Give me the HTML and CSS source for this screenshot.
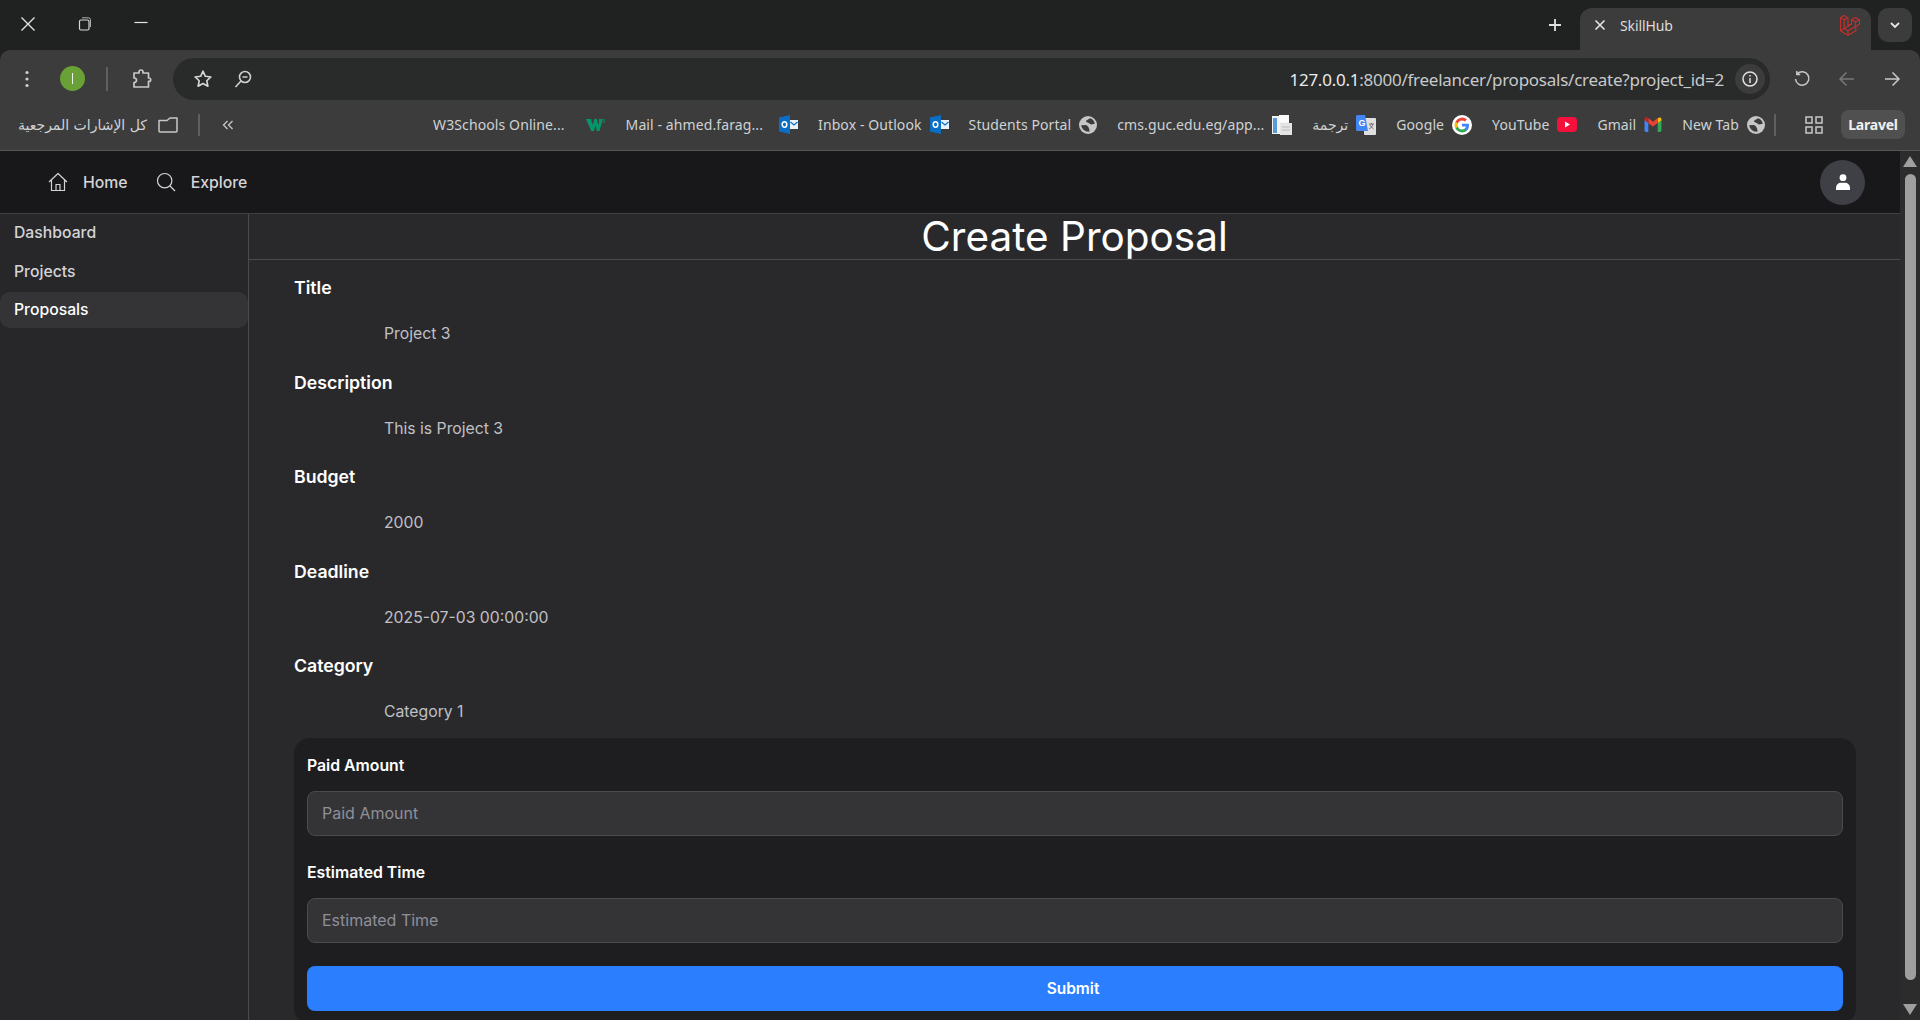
FILE: index.html
```html
<!DOCTYPE html>
<html lang="en">
<head>
<meta charset="utf-8">
<title>SkillHub</title>
<link rel="stylesheet" href="styles.css">
</head>
<body>
<div class="browser">
  <header class="titlebar">
    <div class="win-controls">
      <svg class="ic" width="18" height="18" viewBox="0 0 18 18"><path d="M2.500 2.500 15.500 15.500M15.500 2.500 2.500 15.500" stroke="#e6e6e6" stroke-width="1.300" fill="none"/></svg>
      <svg class="ic" width="16" height="16" viewBox="0 0 16 16"><rect x="2.500" y="4" width="9.500" height="10" rx="1.500" stroke="#d8d8d8" stroke-width="1.200" fill="none"/><path d="M5 1.800h6.500a2 2 0 0 1 2 2V11" stroke="#b0b0b0" fill="none"/></svg>
      <svg class="ic" width="16" height="16" viewBox="0 0 16 16"><path d="M1.500 6.500h13" stroke="#e6e6e6" stroke-width="1.200"/></svg>
    </div>
    <div class="tabstrip">
      <svg class="ic newtab" width="14" height="14" viewBox="0 0 14 14"><path d="M7 1v12M1 7h12" stroke="#e0e0e0" stroke-width="1.800"/></svg>
      <div class="tab">
        <svg class="ic" width="12" height="12" viewBox="0 0 12 12"><path d="M1.500 1.500l9 9M10.500 1.500l-9 9" stroke="#e6e6e6" stroke-width="1.600"/></svg>
        <span class="tab-title">SkillHub</span>
        <svg class="ic tab-fav" width="20" height="21" viewBox="0 0 50 52" fill="none" stroke="#c8302b" stroke-width="2.800" stroke-linejoin="round"><path d="M1 6.300 10.400 1 20 6.300V27l8.800-5V11.500L38.400 6l10.400 5.500v11.200L39.600 28v11.200L20 50.500 1 39.200z"/><path d="M1 6.300l9.400 5.500L20 6.300M10.400 11.800v22L20 39.300v11.200M20 39.300 39.600 28M10.400 33.800 28.800 22M28.800 11.500l9.600 5.500 10.400-5.500M38.400 17v11M1 39.200l9.400-5.400"/></svg>
      </div>
      <div class="tab-menu">
        <svg class="ic" width="12" height="12" viewBox="0 0 12 12"><path d="M2 4l4 4 4-4" stroke="#e6e6e6" stroke-width="1.800" fill="none"/></svg>
      </div>
    </div>
  </header>

  <div class="toolbar">
    <svg class="ic tb-menu" width="4" height="18" viewBox="0 0 4 18"><circle cx="2" cy="2.500" r="1.600" fill="#d0d0d0"/><circle cx="2" cy="9" r="1.600" fill="#d0d0d0"/><circle cx="2" cy="15.500" r="1.600" fill="#d0d0d0"/></svg>
    <div class="profile"><span class="profile-l"></span></div>
    <span class="tb-sep"></span>
    <svg class="ic tb-puzzle" width="20" height="22" viewBox="0 0 20 22" fill="none" stroke="#c8c8c8" stroke-width="1.700" stroke-linejoin="round"><path d="M2 6h5V5a2 2 0 0 1 4 0v1h5.500v5h.5a1.700 1.700 0 0 1 0 3.400h-.5V20H2v-4.500c1.500 0 2.500-1 2.500-2.300S3.500 11 2 11z"/></svg>
    <div class="omnibox">
      <svg class="ic" width="20" height="20" viewBox="0 0 20 20"><path d="M10 2.200l2.350 5.100 5.550.65-4.100 3.800 1.100 5.500L10 14.500l-4.900 2.750 1.100-5.500-4.100-3.800 5.550-.65z" fill="none" stroke="#d8d8d8" stroke-width="1.600" stroke-linejoin="round"/></svg>
      <svg class="ic lens" width="18" height="18" viewBox="0 0 18 18" fill="none" stroke="#d0d0d0" stroke-width="1.600"><circle cx="11" cy="7" r="5.500"/><path d="M7 11l-5.500 6M8.500 7h5"/></svg>
      <span class="url"><span class="url-host">127.0.0.1</span>:8000/freelancer/proposals/create?project_id=2</span>
      <div class="info-chip">
        <svg class="ic" width="18" height="18" viewBox="0 0 18 18" fill="none" stroke="#e0e0e0" stroke-width="1.500"><circle cx="9" cy="9" r="7"/><path d="M9 8v5M9 5v1.600"/></svg>
      </div>
    </div>
    <div class="nav-btns">
      <svg class="ic" width="18" height="18" viewBox="0 0 18 18" fill="none" stroke="#c8c8c8" stroke-width="1.500"><path d="M4.300 3.800A6.700 6.700 0 1 1 2.500 9M3.800 1v3.400h3.400"/></svg>
      <svg class="ic" width="18" height="18" viewBox="0 0 18 18" fill="none" stroke="#777" stroke-width="1.500"><path d="M16 9H2M8.500 2.500 2 9l6.500 6.500"/></svg>
      <svg class="ic" width="18" height="18" viewBox="0 0 18 18" fill="none" stroke="#c8c8c8" stroke-width="1.500"><path d="M2 9h14M9.500 2.500 16 9l-6.500 6.500"/></svg>
    </div>
  </div>

  <nav class="bookmarks">
    <span class="bm bm-all"><span class="bm-t bm-ar">كل الإشارات المرجعية</span>
      <svg class="ic" width="20" height="16" viewBox="0 0 20 16" fill="none" stroke="#c8c8c8" stroke-width="1.500" stroke-linejoin="round"><path d="M1 3.500h8L12 1h7v13a1 1 0 0 1-1 1H2a1 1 0 0 1-1-1z"/></svg>
    </span>
    <span class="bm-sep sep-a"></span>
    <svg class="ic chev" width="12" height="12" viewBox="0 0 12 12" fill="none" stroke="#c8c8c8" stroke-width="1.300"><path d="M5.500 2 1.500 6l4 4M10.500 2l-4 4 4 4"/></svg>
    <div class="bm-list">
      <span class="bm bm-wide"><span class="bm-t">W3Schools Online...</span>
        <svg class="ic" width="20" height="13" viewBox="0 0 20 13"><path d="M0 1h5l1.700 6L8.200 1h2.600l1.500 6L13 4.500V1h3.800l-3.300 12h-2.700L9.500 7.500 8 13H5.200z" fill="#04956a"/><text x="16.200" y="4.500" font-size="5.500" fill="#04956a" class="svg-t">3</text></svg>
      </span>
      <span class="bm bm-mid"><span class="bm-t">Mail - ahmed.farag...</span>
        <svg class="ic" width="19" height="19" viewBox="0 0 19 19"><path d="M0 2.500 11 0v19L0 16.500z" fill="#0a6fc4"/><path d="M11 5h8v9h-8z" fill="#e8f2fb"/><ellipse cx="5.500" cy="9.500" rx="2.300" ry="2.800" fill="none" stroke="#fff" stroke-width="1.500"/><path d="M11.500 7l3.500 3 3.500-3" fill="none" stroke="#0a6fc4" stroke-width="1.200"/></svg>
      </span>
      <span class="bm"><span class="bm-t">Inbox - Outlook</span>
        <svg class="ic" width="19" height="19" viewBox="0 0 19 19"><path d="M0 2.500 11 0v19L0 16.500z" fill="#0a6fc4"/><path d="M11 5h8v9h-8z" fill="#e8f2fb"/><ellipse cx="5.500" cy="9.500" rx="2.300" ry="2.800" fill="none" stroke="#fff" stroke-width="1.500"/><path d="M11.500 7l3.500 3 3.500-3" fill="none" stroke="#0a6fc4" stroke-width="1.200"/></svg>
      </span>
      <span class="bm"><span class="bm-t">Students Portal</span>
        <svg class="ic" width="18" height="18" viewBox="0 0 18 18"><circle cx="9" cy="9" r="9" fill="#c4c7c5"/><path d="M11 2.300c2.700.8 4.500 2.900 4.800 5.500l-3.800.7c-2-1.700-4.300-1.800-5.300-3.600zM2.200 9.300l4.600-.3c2.300.8 3.600 2.800 3.800 6.600-4.300.6-7.900-2.300-8.400-6.300z" fill="#3c3c3c"/></svg>
      </span>
      <span class="bm"><span class="bm-t">cms.guc.edu.eg/app...</span>
        <svg class="ic" width="20" height="20" viewBox="0 0 20 20"><rect x="0" y="1" width="17" height="18" fill="#f2f2f2"/><rect x="1" y="3" width="4" height="15" fill="#5b9bd5"/><rect x="7" y="0" width="10" height="7" fill="#fafafa"/><rect x="8" y="8" width="12" height="12" fill="#e4e4e4"/><path d="M10 12h8M10 15h8" stroke="#bcbcbc" stroke-width="1.200"/></svg>
      </span>
      <span class="bm"><span class="bm-t bm-ar">ترجمة</span>
        <svg class="ic" width="20" height="20" viewBox="0 0 20 20"><rect x="8" y="3" width="12" height="17" rx="1" fill="#e0e0e0"/><path d="M0 1.500A1.500 1.500 0 0 1 1.500 0H9l3 16H1.500A1.500 1.500 0 0 1 0 14.500z" fill="#4285f4"/><text x="2.500" y="11" font-size="9" font-weight="700" fill="#fff" class="svg-t">G</text><path d="M13 9h5M15.500 8v1M17 9c-.6 2.400-2.300 4-4 5M14 9.500c.6 1.800 2 3.400 3.500 4.500" stroke="#666" stroke-width=".9" fill="none"/></svg>
      </span>
      <span class="bm"><span class="bm-t">Google</span>
        <svg class="ic" width="20" height="20" viewBox="0 0 20 20"><circle cx="10" cy="10" r="10" fill="#fff"/><g transform="translate(-2.400 -2.400) scale(1.240)"><path d="M15.600 10.200c0-.5 0-.9-.1-1.300H10v2.400h3.200a2.700 2.700 0 0 1-1.200 1.800v1.500h1.900c1.100-1 1.700-2.500 1.700-4.400z" fill="#4285f4"/><path d="M10 16c1.600 0 3-.5 3.900-1.400L12 13.100c-.5.400-1.200.6-2 .6a3.500 3.500 0 0 1-3.300-2.400H4.800v1.600A6 6 0 0 0 10 16z" fill="#34a853"/><path d="M6.700 11.300a3.500 3.500 0 0 1 0-2.600V7.100H4.800a6 6 0 0 0 0 5.800z" fill="#fbbc05"/><path d="M10 6.300c.9 0 1.700.3 2.300.9L14 5.500A6 6 0 0 0 4.800 7.100l1.900 1.600A3.500 3.500 0 0 1 10 6.300z" fill="#ea4335"/></g></svg>
      </span>
      <span class="bm"><span class="bm-t">YouTube</span>
        <svg class="ic" width="20" height="15" viewBox="0 0 20 15"><rect width="20" height="15" rx="4" fill="#f6103c"/><path d="M8 4.500l5 3-5 3z" fill="#fff"/></svg>
      </span>
      <span class="bm"><span class="bm-t">Gmail</span>
        <svg class="ic" width="18" height="15" viewBox="0 0 18 16"><path d="M0 3v11.500A1.500 1.500 0 0 0 1.500 16H4V6z" fill="#4285f4"/><path d="M18 3v11.500a1.500 1.500 0 0 1-1.500 1.500H14V6z" fill="#34a853"/><path d="M14 1v5.500L18 3.500V2.300C18 .8 16.300 0 15 1z" fill="#fbbc05"/><path d="M4 6.500 9 10l5-3.500V1L9 5 4 1z" fill="#ea4335"/><path d="M0 2.300v1.200l4 3V1L3 .6C1.700-.2 0 .8 0 2.300z" fill="#c5221f"/></svg>
      </span>
      <span class="bm"><span class="bm-t">New Tab</span>
        <svg class="ic" width="18" height="18" viewBox="0 0 18 18"><circle cx="9" cy="9" r="9" fill="#c4c7c5"/><path d="M11 2.300c2.700.8 4.500 2.900 4.800 5.500l-3.800.7c-2-1.700-4.300-1.800-5.300-3.600zM2.200 9.300l4.600-.3c2.300.8 3.600 2.800 3.800 6.600-4.300.6-7.900-2.300-8.400-6.300z" fill="#3c3c3c"/></svg>
      </span>
    </div>
    <span class="bm-sep sep-b"></span>
    <svg class="ic grid-ic" width="18" height="18" viewBox="0 0 18 18" fill="none" stroke="#c8c8c8" stroke-width="1.500"><rect x="1" y="1" width="6" height="6"/><rect x="11" y="1" width="6" height="6"/><rect x="1" y="11" width="6" height="6"/><rect x="11" y="11" width="6" height="6"/></svg>
    <span class="chip">Laravel</span>
  </nav>
</div>

<div class="viewport">
  <div class="app">
    <header class="appnav">
      <a class="appnav-link">
        <svg class="ic" width="20" height="20" viewBox="0 0 20 20" fill="none" stroke="#d4d4d8" stroke-width="1.200" stroke-linejoin="round"><path d="M1 10 10 1.500 19 10M3.500 8v10.500h13V8M8 18.500v-6h4v6"/></svg>
        <span>Home</span>
      </a>
      <a class="appnav-link">
        <svg class="ic" width="20" height="20" viewBox="0 0 20 20" fill="none" stroke="#d4d4d8" stroke-width="1.200"><circle cx="8.700" cy="8.700" r="7.200"/><path d="M14 14l5 5"/></svg>
        <span>Explore</span>
      </a>
      <div class="avatar">
        <svg class="ic" width="14" height="16" viewBox="0 0 14 16" fill="#fff"><circle cx="7" cy="3.700" r="3.400"/><path d="M0 16v-2.200A5 5 0 0 1 5 8.800h4a5 5 0 0 1 5 5V16z"/></svg>
      </div>
    </header>
    <div class="body">
      <aside class="sidebar">
        <a class="side-link">Dashboard</a>
        <a class="side-link">Projects</a>
        <a class="side-link side-active">Proposals</a>
      </aside>
      <main class="main">
        <h1 class="page-title">Create Proposal</h1>
        <div class="content">
          <section class="field"><h3 class="field-l">Title</h3><p class="field-v">Project 3</p></section>
          <section class="field"><h3 class="field-l">Description</h3><p class="field-v">This is Project 3</p></section>
          <section class="field"><h3 class="field-l">Budget</h3><p class="field-v">2000</p></section>
          <section class="field"><h3 class="field-l">Deadline</h3><p class="field-v">2025-07-03 00:00:00</p></section>
          <section class="field"><h3 class="field-l">Category</h3><p class="field-v">Category 1</p></section>
          <form class="card">
            <label class="card-l">Paid Amount</label>
            <input class="card-i" placeholder="Paid Amount">
            <label class="card-l">Estimated Time</label>
            <input class="card-i" placeholder="Estimated Time">
            <button class="submit" type="button">Submit</button>
          </form>
        </div>
      </main>
    </div>
  </div>
  <div class="scrollbar">
    <span class="sb-up"></span>
    <span class="sb-thumb"></span>
    <span class="sb-down"></span>
  </div>
</div>
</body>
</html>
```
FILE: styles.css
```css
* { box-sizing: border-box; }
html, body { margin: 0; height: 1020px; overflow: hidden; background: #29292b; }
body { display: flex; flex-direction: column; font-family: Inter, sans-serif; }
.ic { display: block; flex: none; }
.svg-t { font-family: "Liberation Sans", sans-serif; }

.browser { flex: none; background: #202221; }
.titlebar { height: 50px; display: flex; align-items: flex-start; justify-content: space-between; }
.win-controls { display: flex; align-items: center; gap: 40px; height: 48px; padding-left: 19px; }
.tabstrip { display: flex; align-items: flex-start; padding-top: 8px; padding-right: 8px; }
.newtab { margin: 10px 18px 0 0; }
.tab { width: 291px; height: 42px; background: #3c3c3c; border-radius: 12px 12px 0 0; display: flex; align-items: center; padding: 0 0 8px 14px; }
.tab-title { margin-left: 14px; font: 14px "Noto Sans", sans-serif; color: #dcdcdc; letter-spacing: -.1px; flex: 1; }
.tab-fav { margin-right: 11px; }
.tab-menu { width: 34px; height: 34px; margin-left: 7px; border-radius: 10px; background: #3c3c3c; display: flex; align-items: center; justify-content: center; }

.toolbar { height: 50px; background: #3c3c3c; border-radius: 10px 10px 0 0; display: flex; align-items: flex-start; padding-top: 8px; }
.tb-menu { margin: 12px 0 0 25px; }
.profile { width: 25px; height: 25px; margin: 8px 0 0 30.500px; border-radius: 50%; background: #6aa136; display: flex; align-items: center; justify-content: center; }
.profile-l { width: 1px; height: 11px; background: #f2f2f2; }
.tb-sep { width: 2px; height: 24px; margin: 9px 0 0 21px; background: #5f5f5f; }
.tb-puzzle { margin: 9px 0 0 24px; }
.omnibox { width: 1597px; height: 42px; margin-left: 21.500px; border-radius: 21px; background: #292a2a; display: flex; align-items: center; padding: 0 5px 0 20px; }
.lens { margin-left: 21px; }
.url { margin-left: auto; font: 17px "Noto Sans", sans-serif; letter-spacing: -.25px; color: #c7c9cb; white-space: nowrap; }
.url-host { color: #e8eaed; }
.info-chip { width: 30px; height: 30px; margin-left: 11px; border-radius: 50%; background: #3c3c3c; display: flex; align-items: center; justify-content: center; }
.nav-btns { display: flex; gap: 27px; margin: 12px 0 0 23px; }

.bookmarks { height: 51px; background: #3c3c3c; border-bottom: 1px solid #555; display: flex; align-items: center; padding: 0 15px 1px 18px; }
.bm { display: flex; align-items: center; gap: 8px; }
.bm-wide { gap: 21px; }
.bm-mid { gap: 16px; }
.bm-t { font: 14px "Noto Sans", "DejaVu Sans", sans-serif; letter-spacing: .1px; color: #cfd2d4; white-space: nowrap; }
.bm-ar { font-family: "DejaVu Sans", sans-serif; font-size: 14px; letter-spacing: 0; }
.bm-all { gap: 11px; }
.bm-sep { width: 2px; height: 22px; background: #5f5f5f; }
.sep-a { margin-left: 20px; }
.chev { margin-left: 22px; }
.bm-list { display: flex; align-items: center; gap: 20px; margin-left: auto; }
.sep-b { margin-left: 9px; }
.grid-ic { margin-left: 29px; }
.chip { margin-left: 18px; width: 64px; height: 29px; border-radius: 8px; background: #505050; display: flex; align-items: center; justify-content: center; font: 700 14px "Noto Sans", sans-serif; letter-spacing: -.2px; color: #f0f0f0; }

.viewport { flex: 1; min-height: 0; display: flex; }
.app { flex: 1; min-width: 0; display: flex; flex-direction: column; }
.scrollbar { width: 20px; background: #2c2c2c; position: relative; display: flex; flex-direction: column; align-items: center; padding: 5px 0; }
.sb-up { width: 0; height: 0; border: 7px solid transparent; border-top: 0; border-bottom: 11px solid #9f9f9f; }
.sb-thumb { width: 11px; height: 806px; margin-top: 7px; border-radius: 6px; background: #9f9f9f; }
.sb-down { width: 0; height: 0; margin-top: auto; border: 7px solid transparent; border-bottom: 0; border-top: 11px solid #9f9f9f; }

.appnav { height: 63px; flex: none; background: #18181b; border-bottom: 1px solid #3f3f46; display: flex; align-items: center; padding: 0 35px 0 48px; gap: 28px; }
.appnav-link { display: flex; align-items: center; gap: 15px; font-size: 15.800px; font-weight: 500; color: #d4d4d8; }
.avatar { margin-left: auto; width: 45px; height: 45px; border-radius: 50%; background: #3f3f46; display: flex; align-items: center; justify-content: center; }

.body { flex: 1; min-height: 0; display: flex; }
.sidebar { width: 249px; flex: none; background: #27272a; border-right: 1px solid #4a4a4f; padding-top: 1px; display: flex; flex-direction: column; gap: 2.500px; }
.side-link { height: 36px; padding: 0 14px 1px; border-radius: 10px; display: flex; align-items: center; font-size: 15.750px; font-weight: 500; color: #d4d4d8; }
.side-active { background: #343437; color: #fff; }

.main { flex: 1; min-width: 0; background: #29292b; }
.page-title { margin: 0; height: 46px; border-bottom: 1px solid #4a4a4f; text-align: center; font-size: 40.500px; line-height: 46px; font-weight: 400; color: #fff; }
.content { padding: 14px 44px 0 45px; }
.field { height: 94.500px; }
.field-l { margin: 0; font-size: 17.700px; line-height: 28px; font-weight: 600; color: #fff; }
.field-v { margin: 20px 0 0 90px; font-size: 15.750px; line-height: 24px; color: #c0c0c6; }
.card { margin-top: -9px; padding: 14px 13px 13px; border-radius: 16px; background: #1e1e20; display: flex; flex-direction: column; }
.card-l { height: 28px; font-size: 15.800px; line-height: 28px; font-weight: 600; color: #fff; }
.card-i { height: 45px; margin: 11px 0 23px; padding: 0 14px; border: 1px solid #4a4a4f; border-radius: 8px; background: #343437; font: 16px Inter, sans-serif; color: #fff; outline: none; }
.card-i::placeholder { color: #8f8f99; opacity: 1; }
.submit { height: 45px; padding: 0 4px 0 0; border: 0; border-radius: 8px; background: #2b7fff; color: #fff; font: 600 15.500px Inter, sans-serif; }
```
